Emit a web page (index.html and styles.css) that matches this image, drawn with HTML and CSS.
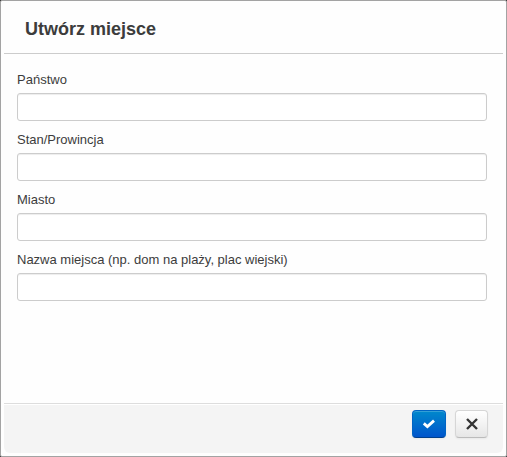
FILE: index.html
```html
<!DOCTYPE html>
<html lang="pl">
<head>
    <meta charset="UTF-8">
    <meta name="viewport" content="width=device-width, initial-scale=1.0">
    <title>Utwórz miejsce</title>
    <link rel="stylesheet" href="styles.css">
</head>
<body>
    <form class="modal">
        <div class="modal-header">
            <h3>Utwórz miejsce</h3>
        </div>
        <div class="modal-body">
            <label for="country">Państwo</label>
            <input type="text" id="country" name="country">
            <label for="state">Stan/Prowincja</label>
            <input type="text" id="state" name="state">
            <label for="city">Miasto</label>
            <input type="text" id="city" name="city">
            <label for="placeName">Nazwa miejsca (np. dom na plaży, plac wiejski)</label>
            <input type="text" id="placeName" name="placeName">
        </div>
        <div class="modal-footer">
            <button type="submit" class="btn btn-primary" aria-label="Zapisz">
                <svg width="14" height="14" viewBox="0 0 14 14"><path d="M1.8 6.4 L5.4 9.6 L12 3.6" fill="none" stroke="#fff" stroke-width="2.8"/></svg>
            </button>
            <button type="button" class="btn" aria-label="Anuluj">
                <svg width="14" height="14" viewBox="0 0 14 14"><path d="M2 2 L12 12 M12 2 L2 12" fill="none" stroke="#333" stroke-width="2.4"/></svg>
            </button>
        </div>
    </form>
</body>
</html>
```
FILE: styles.css
```css
* {
    box-sizing: border-box;
}
body {
    margin: 0;
    background-color: #333;
    font-family: Arial, "Liberation Sans", sans-serif;
    font-size: 13px;
    line-height: 20px;
    color: #3c3c3c;
}
.modal {
    display: flex;
    flex-direction: column;
    min-height: 100vh;
    padding: 3px;
    border: 1px solid #a3a3a3;
    border-radius: 2px;
    background-color: #fefefe;
}
.modal-header {
    padding: 11px 21px 9px;
    border-bottom: 1px solid #ccc;
}
.modal-header h3 {
    margin: 0;
    font-size: 18px;
    line-height: 29px;
}
.modal-body {
    display: flex;
    flex-direction: column;
    flex: 1;
    padding: 16px 16px 15px 13px;
}
.modal-body label {
    margin-bottom: 3px;
}
.modal-body input {
    height: 28px;
    margin-bottom: 9px;
    padding: 4px 6px;
    border: 1px solid #ccc;
    border-radius: 3px;
    background-color: #fff;
    box-shadow: inset 0 1px 1px rgba(0, 0, 0, 0.075);
    font: inherit;
    color: #555;
}
.modal-footer {
    display: flex;
    justify-content: flex-end;
    gap: 9px;
    padding: 6px 15px 15px;
    border-top: 1px solid #ddd;
    border-radius: 0 0 6px 6px;
    background-color: #f4f4f4;
    box-shadow: inset 0 1px 0 #fff;
}
.btn {
    display: flex;
    align-items: center;
    justify-content: center;
    width: 33px;
    height: 28px;
    padding: 0;
    border: 1px solid #d6d6d6;
    border-bottom-color: #bbb;
    border-radius: 4px;
    background: linear-gradient(#fff, #e6e6e6);
    box-shadow: inset 0 1px 0 rgba(255, 255, 255, 0.2), 0 1px 2px rgba(0, 0, 0, 0.05);
    cursor: pointer;
}
.btn-primary {
    width: 34px;
    border-color: #0064c4 #0064c4 #003f8c;
    background: linear-gradient(#0088cc, #0055cc);
}
```
